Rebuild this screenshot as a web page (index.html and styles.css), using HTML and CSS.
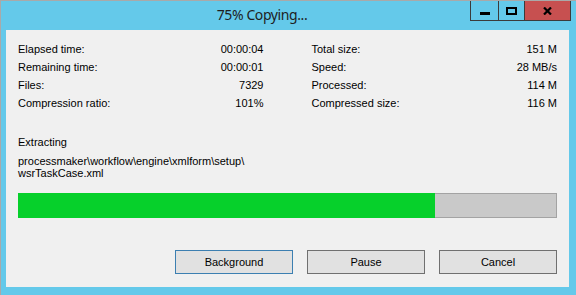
FILE: index.html
```html
<!DOCTYPE html>
<html>
<head>
  <meta name="viewport" content="width=device-width, initial-scale=1.0">
  <link rel="stylesheet" href="styles.css">
</head>
<body>

  <div class="window">
    <div class="titlebar">
      <div class="title">75% Copying...</div>
      <div class="caption-buttons">
        <div class="cap-btn cap-min">
          <svg width="10" height="3" viewBox="0 0 10 3"><rect x="0" y="0" width="10" height="3" fill="#000"/></svg>
        </div>
        <div class="cap-btn cap-max">
          <svg width="11" height="8" viewBox="0 0 11 8"><rect x="1" y="1" width="9" height="6" fill="none" stroke="#000" stroke-width="2"/></svg>
        </div>
        <div class="cap-btn cap-close">
          <svg width="9" height="8" viewBox="0 0 9 8"><path d="M1 0.5 L8 7.5 M8 0.5 L1 7.5" stroke="#000" stroke-width="2.2" fill="none"/></svg>
        </div>
      </div>
    </div>

    <div class="client">
      <div class="stats">
        <div class="stat-col">
          <div class="stat-row"><span>Elapsed time:</span><span>00:00:04</span></div>
          <div class="stat-row"><span>Remaining time:</span><span>00:00:01</span></div>
          <div class="stat-row"><span>Files:</span><span>7329</span></div>
          <div class="stat-row"><span>Compression ratio:</span><span>101%</span></div>
        </div>
        <div class="stat-col">
          <div class="stat-row"><span>Total size:</span><span>151 M</span></div>
          <div class="stat-row"><span>Speed:</span><span>28 MB/s</span></div>
          <div class="stat-row"><span>Processed:</span><span>114 M</span></div>
          <div class="stat-row"><span>Compressed size:</span><span>116 M</span></div>
        </div>
      </div>

      <div class="action">Extracting</div>
      <div class="path">processmaker\workflow\engine\xmlform\setup\<br>wsrTaskCase.xml</div>

      <div class="progress">
        <div class="progress-fill" style="width: 77.7%;"></div>
      </div>

      <div class="buttons">
        <button class="btn btn-default">Background</button>
        <button class="btn">Pause</button>
        <button class="btn">Cancel</button>
      </div>
    </div>
  </div>

</body>
</html>
```

FILE: styles.css
```css
body {
  margin: 0;
  font-family: "Liberation Sans", Arial, sans-serif;
  font-size: 11px;
  color: #000;
}

/* Window frame */
.window {
  width: 576px;
  height: 295px;
  box-sizing: border-box;
  background: #64c9ea;
  border-top: 1px solid #a9a9a9;
  border-left: 1px solid #a9a9a9;
  padding: 0 7px 0 5px;
  display: flex;
  flex-direction: column;
}

.titlebar {
  height: 29px;
  display: flex;
  align-items: flex-start;
  margin-right: -2px;
}

.title {
  flex: 1;
  text-align: center;
  padding-left: 48px;
  padding-top: 4px;
  font-family: "Noto Sans", sans-serif;
  font-size: 14px;
  letter-spacing: -0.4px;
  line-height: 20px;
  color: #1e1e1e;
}

.caption-buttons {
  display: flex;
}

.cap-btn {
  height: 20px;
  box-sizing: border-box;
  border: 1px solid #3b3b3b;
  border-top: none;
  display: flex;
  align-items: center;
  justify-content: center;
}

.cap-btn + .cap-btn {
  border-left: none;
}

.cap-min {
  width: 29px;
  padding-top: 5px;
}

.cap-max {
  width: 26px;
}

.cap-close {
  width: 46px;
  background: #c75050;
}

/* Client area */
.client {
  height: 257px;
  background: #f0f0f0;
  padding: 10px 12px 0 12px;
  box-sizing: border-box;
}

.stats {
  display: flex;
  gap: 48px;
}

.stat-col {
  width: 246px;
}

.stat-row {
  display: flex;
  justify-content: space-between;
  line-height: 18px;
}

.action {
  margin-top: 24px;
  line-height: 13px;
}

.path {
  margin-top: 6px;
  line-height: 12px;
}

/* Progress bar */
.progress {
  margin-top: 14px;
  width: 539px;
  height: 25px;
  box-sizing: border-box;
  border: 1px solid #a3a3a3;
  background: #c9c9c9;
  display: flex;
}

.progress-fill {
  margin: -1px 0 -1px -1px;
  background: #06d02b;
}

/* Dialog buttons */
.buttons {
  margin-top: 32px;
  width: 539px;
  display: flex;
  justify-content: flex-end;
  gap: 14px;
}

.btn {
  width: 118px;
  height: 24px;
  box-sizing: border-box;
  border: 1px solid #707070;
  background: #e1e1e1;
  font-family: "Liberation Sans", Arial, sans-serif;
  font-size: 11px;
  color: #000;
  padding: 0;
}

.btn-default {
  border-color: #3c7fb1;
}
```
